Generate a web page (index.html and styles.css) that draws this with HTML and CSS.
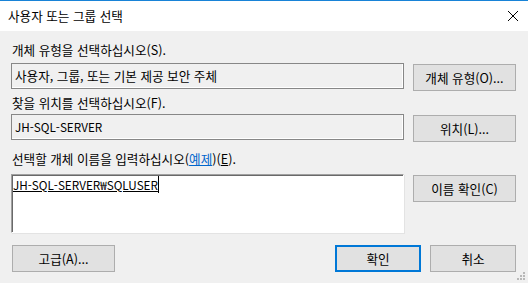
FILE: index.html
```html
<!DOCTYPE html>
<html lang="ko">
<head>
    <meta charset="UTF-8">
    <meta name="viewport" content="width=device-width, initial-scale=1.0">
    <title>사용자 또는 그룹 선택</title>
    <link rel="stylesheet" href="styles.css">
</head>
<body>
    <div class="window">
        <div class="titlebar">
            <span class="title">사용자 또는 그룹 선택</span>
            <svg class="close" width="12" height="12" viewBox="0 0 12 12">
                <path d="M1 1 L11 11 M11 1 L1 11" stroke="#000" stroke-width="1" fill="none"/>
            </svg>
        </div>

        <div class="content">
            <div class="label label-first">개체 유형을 선택하십시오(S).</div>
            <div class="row">
                <div class="field">사용자, 그룹, 또는 기본 제공 보안 주체</div>
                <button class="btn">개체 유형(O)...</button>
            </div>

            <div class="label label-second">찾을 위치를 선택하십시오(F).</div>
            <div class="row">
                <div class="field latin">JH-SQL-SERVER</div>
                <button class="btn">위치(L)...</button>
            </div>

            <div class="label label-third">선택할 개체 이름을 입력하십시오(<a class="link" href="#">예제</a>)(<u>E</u>).</div>
            <div class="row">
                <div class="names latin"><u>JH-SQL-SERVER₩SQLUSER</u><span class="caret"></span></div>
                <button class="btn">이름 확인(C)</button>
            </div>

            <div class="footer">
                <button class="btn">고급(A)...</button>
                <div class="footer-right">
                    <button class="btn btn-small btn-default">확인</button>
                    <button class="btn btn-small">취소</button>
                </div>
            </div>
        </div>

        <!-- 크기 조절 손잡이 -->
        <svg class="grip" width="9" height="9" viewBox="0 0 9 9">
            <rect x="6" y="0" width="2" height="2" fill="#b8b8b8"/>
            <rect x="3" y="3" width="2" height="2" fill="#b8b8b8"/>
            <rect x="6" y="3" width="2" height="2" fill="#b8b8b8"/>
            <rect x="0" y="6" width="2" height="2" fill="#b8b8b8"/>
            <rect x="3" y="6" width="2" height="2" fill="#b8b8b8"/>
            <rect x="6" y="6" width="2" height="2" fill="#b8b8b8"/>
        </svg>
    </div>
</body>
</html>
```

FILE: styles.css
```css
body {
    margin: 0;
    font-family: "Noto Sans CJK KR", sans-serif;
    font-size: 12.6px;
    color: #000;
    background-color: #f0f0f0;
}
.window {
    position: relative;
    width: 528px;
    height: 283px;
    background-color: #f0f0f0;
    overflow: hidden;
}
.titlebar {
    height: 30px;
    border-top: 1px solid #1883d7;
    background-color: #fff;
    display: flex;
    align-items: center;
    justify-content: space-between;
    padding: 0 8px 0 8px;
}
.title {
    font-size: 12.6px;
    line-height: 16px;
}
.close {
    margin-right: 1px;
}
.content {
    padding: 0 12px 0 11px;
}
.label {
    line-height: 16px;
    padding-left: 1px;
}
.label-first {
    margin-top: 11px;
    margin-bottom: 5px;
}
.label-second {
    margin-top: 4px;
    margin-bottom: 3px;
}
.label-third {
    margin-top: 9px;
    margin-bottom: 7px;
}
.link {
    color: #0066cc;
    text-decoration: underline;
}
.row {
    display: flex;
    gap: 9px;
    align-items: flex-start;
}
.field {
    flex: 1;
    height: 24px;
    line-height: 24px;
    padding-left: 3px;
    border: 1px solid #878787;
    box-shadow: inset -1px -1px 0 #fff;
    background-color: #f0f0f0;
    white-space: nowrap;
}
.latin {
    font-size: 11.7px;
}
.names {
    flex: 1;
    height: 56px;
    line-height: 17px;
    padding: 1px 0 0 0;
    background-color: #fff;
    border-top: 1px solid #a0a0a0;
    border-left: 1px solid #a0a0a0;
    border-right: 1px solid #fff;
    border-bottom: 1px solid #fff;
    box-shadow: inset 1px 1px 0 #696969, 1px 1px 0 #e3e3e3;
    white-space: nowrap;
    display: flex;
    align-items: flex-start;
}
.names u {
    margin-left: 1px;
}
.caret {
    display: inline-block;
    width: 1px;
    height: 17px;
    background-color: #000;
}
.btn {
    width: 103px;
    height: 27px;
    padding: 0;
    margin-top: 1px;
    font-family: inherit;
    font-size: 12.6px;
    color: #000;
    background-color: #e1e1e1;
    border: 1px solid #adadad;
}
.btn-small {
    width: 86px;
}
.btn-default {
    border: 2px solid #0078d7;
}
.footer {
    display: flex;
    justify-content: space-between;
    margin-top: 11px;
    padding-left: 1px;
}
.footer-right {
    display: flex;
    gap: 9px;
}
.grip {
    position: absolute;
    right: 2px;
    bottom: 2px;
}
```
